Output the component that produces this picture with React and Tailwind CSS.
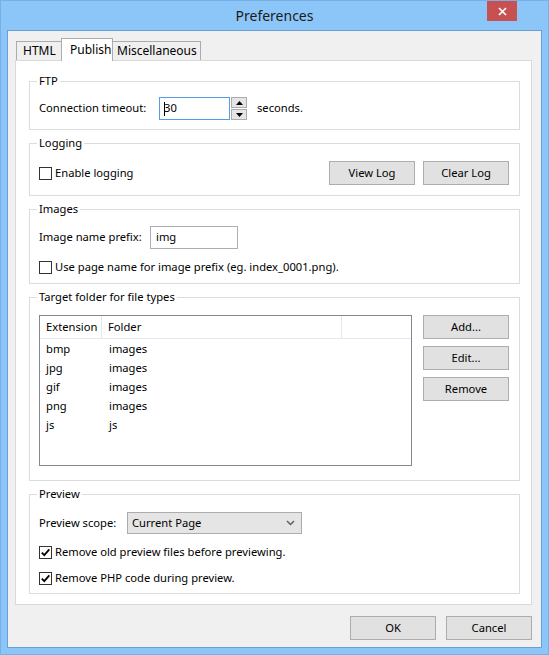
import React from "react";

function Button({ children, className = "" }) {
  return (
    <div
      className={
        "flex items-center justify-center h-[24px] w-[86px] bg-[#e1e1e1] border border-[#adadad] text-black " +
        className
      }
    >
      {children}
    </div>
  );
}

function CheckBox({ checked, label }) {
  return (
    <div className="flex items-center h-[16px]">
      <div className="w-[13px] h-[13px] border border-[#333333] bg-white flex items-center justify-center">
        {checked && (
          <svg width="11" height="11" viewBox="0 0 11 11">
            <path d="M1.8 5.6 L4.3 8.2 L9.3 2.3" fill="none" stroke="#000" strokeWidth="1.8" />
          </svg>
        )}
      </div>
      <span className="ml-[3px]">{label}</span>
    </div>
  );
}

function Group({ title, children, className = "" }) {
  return (
    <fieldset className={"border border-[#dcdcdc] ml-[13px] w-[491px] pl-[9px] pr-[10px] " + className}>
      <legend className="-ml-[2px] px-[2px] leading-[16px]">{title}</legend>
      {children}
    </fieldset>
  );
}

const files = [
  ["bmp", "images"],
  ["jpg", "images"],
  ["gif", "images"],
  ["png", "images"],
  ["js", "js"],
];

export default function App() {
  return (
    <div className="w-[549px] h-[655px] bg-[#8cc6f8] border border-[#78b0e6] flex flex-col font-['Noto_Sans',sans-serif] text-[11.2px] text-black">
      {/* title bar */}
      <div className="relative h-[29px] flex items-center justify-center">
        <span className="text-[14px] text-[#1a1a1a] leading-none">Preferences</span>
        <div className="absolute top-0 right-[31px] w-[30px] h-[20px] bg-[#c75050] flex items-center justify-center">
          <svg width="9" height="9" viewBox="0 0 9 9">
            <path d="M1 1 L8 8 M8 1 L1 8" stroke="#fff" strokeWidth="1.7" />
          </svg>
        </div>
      </div>

      {/* client area */}
      <div className="flex-1 mx-[6px] mb-[6px] border border-[#6a9fd3] bg-[#f0f0f0] flex flex-col">
        {/* tabs */}
        <div className="h-[29px] flex items-end pl-[8px] text-[12px]">
          <div className="h-[19px] w-[45px] border-t border-l border-[#acacac] bg-[#f0f0f0] flex items-center pl-[6px]">
            HTML
          </div>
          <div className="relative z-10 -mb-px h-[23px] w-[52px] border border-b-0 border-[#acacac] bg-white flex items-start pt-[2px] pl-[8px]">
            Publish
          </div>
          <div className="h-[19px] w-[88px] border-t border-r border-[#acacac] bg-[#f0f0f0] flex items-center pl-[4px]">
            Miscellaneous
          </div>
        </div>

        {/* tab panel */}
        <div className="ml-[7px] w-[517px] border border-[#d9d9d9] bg-white pt-[12px] pb-[10px] flex flex-col gap-[5px]">
          <Group title="FTP" className="pt-[8px] pb-[9px]">
            <div className="flex items-center h-[23px]">
              <span className="w-[120px]">Connection timeout:</span>
              <div className="w-[71px] h-[23px] border border-[#569de5] flex items-center pl-[4px]">
                <span className="w-px h-[14px] bg-black -mr-px"></span>
                <span>30</span>
              </div>
              <div className="ml-[1px] flex flex-col h-[23px] w-[16px]">
                <div className="h-[11px] border border-[#acacac] bg-[#e5e5e5] flex items-center justify-center">
                  <svg width="7" height="4" viewBox="0 0 7 4">
                    <path d="M0 4 L3.5 0 L7 4 Z" fill="#000" />
                  </svg>
                </div>
                <div className="h-[11px] mt-[1px] border border-[#acacac] bg-[#e5e5e5] flex items-center justify-center">
                  <svg width="7" height="4" viewBox="0 0 7 4">
                    <path d="M0 0 L3.5 4 L7 0 Z" fill="#000" />
                  </svg>
                </div>
              </div>
              <span className="ml-[10px]">seconds.</span>
            </div>
          </Group>

          <Group title="Logging" className="pt-[10px] pb-[10px]">
            <div className="flex items-center h-[24px]">
              <CheckBox label="Enable logging" />
              <div className="ml-auto flex gap-[8px]">
                <Button>View Log</Button>
                <Button>Clear Log</Button>
              </div>
            </div>
          </Group>

          <Group title="Images" className="pt-[9px] pb-[8px]">
            <div className="flex items-center h-[23px]">
              <span className="w-[111px]">Image name prefix:</span>
              <div className="w-[88px] h-[23px] border border-[#abadb3] flex items-center pl-[5px]">img</div>
            </div>
            <div className="mt-[10px]">
              <CheckBox label="Use page name for image prefix (eg. index_0001.png)." />
            </div>
          </Group>

          <Group title="Target folder for file types" className="pt-[10px] pb-[14px]">
            <div className="flex">
              <div className="w-[373px] h-[151px] border border-[#828790] bg-white">
                <div className="flex h-[23px] border-b border-[#e3e8ee]">
                  <div className="w-[62px] border-r border-[#e3e8ee] flex items-center pl-[6px]">Extension</div>
                  <div className="w-[240px] border-r border-[#e3e8ee] flex items-center pl-[6px]">Folder</div>
                </div>
                <div className="pt-[1px]">
                  {files.map(([ext, folder]) => (
                    <div key={ext} className="flex h-[19px] items-center">
                      <span className="w-[62px] pl-[6px]">{ext}</span>
                      <span className="pl-[7px]">{folder}</span>
                    </div>
                  ))}
                </div>
              </div>
              <div className="ml-auto flex flex-col gap-[7px]">
                <Button>Add...</Button>
                <Button>Edit...</Button>
                <Button>Remove</Button>
              </div>
            </div>
          </Group>

          <Group title="Preview" className="pt-[10px] pb-[7px]">
            <div className="flex items-center h-[22px]">
              <span className="w-[88px]">Preview scope:</span>
              <div className="w-[175px] h-[22px] bg-[#e5e5e5] border border-[#acacac] flex items-center pl-[4px] pr-[6px]">
                <span>Current Page</span>
                <svg className="ml-auto" width="9" height="6" viewBox="0 0 9 6">
                  <path d="M1 1 L4.5 4.5 L8 1" fill="none" stroke="#606060" strokeWidth="1.5" />
                </svg>
              </div>
            </div>
            <div className="mt-[10px]">
              <CheckBox checked label="Remove old preview files before previewing." />
            </div>
            <div className="mt-[10px]">
              <CheckBox checked label="Remove PHP code during preview." />
            </div>
          </Group>
        </div>

        {/* dialog buttons */}
        <div className="mt-[11px] flex justify-end gap-[10px] pr-[9px]">
          <Button>OK</Button>
          <Button>Cancel</Button>
        </div>
      </div>
    </div>
  );
}
